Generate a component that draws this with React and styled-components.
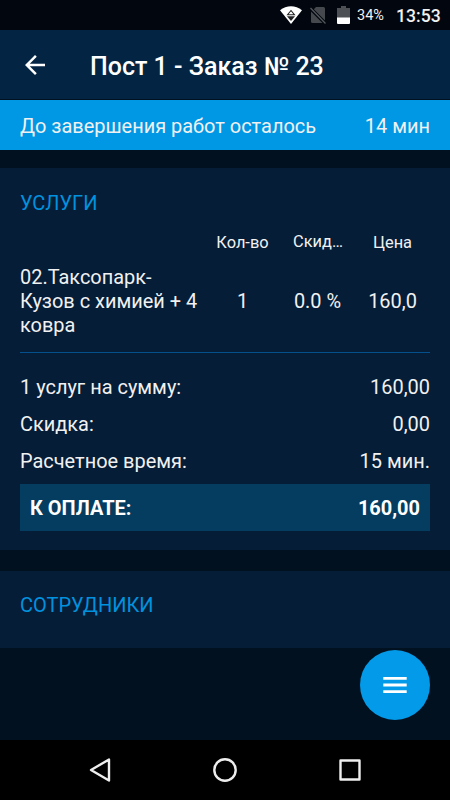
import React from 'react';
import styled, { createGlobalStyle } from 'styled-components';

const GlobalStyle = createGlobalStyle`
  * {
    box-sizing: border-box;
  }

  body {
    margin: 0;
    background: #021120;
    font-family: Roboto, 'Liberation Sans', sans-serif;
  }
`;

const Screen = styled.div`
  position: relative;
  display: flex;
  flex-direction: column;
  width: 450px;
  height: 800px;
  overflow: hidden;
  background: #021120;
  color: #f1f1f1;
  font-size: 19.95px;
`;

const StatusBar = styled.div`
  display: flex;
  align-items: center;
  justify-content: flex-end;
  height: 30px;
  padding-right: 10px;
  background: #01060f;
  font-size: 14.5px;
`;

const StatusIcon = styled.svg`
  display: block;
  margin-right: ${props => props.$gap}px;
`;

const Percent = styled.span`
  width: 27px;
  padding-top: 1px;
  white-space: nowrap;
`;

const Clock = styled.span`
  width: 44px;
  margin-left: 12px;
  padding-top: 1px;
  font-size: 17.6px;
  font-weight: 500;
  line-height: 30px;
  text-align: right;
  white-space: nowrap;
`;

const AppBar = styled.header`
  display: flex;
  align-items: center;
  height: 70px;
  padding-left: 20px;
  background: #032543;
  border-bottom: 1px solid #01111f;
`;

const BackButton = styled.button`
  display: flex;
  width: 30px;
  height: 30px;
  padding: 0;
  border: none;
  background: none;
`;

const Title = styled.h1`
  margin: 4px 0 0 40px;
  color: #fff;
  font-size: 25px;
  font-weight: 500;
  line-height: 30px;
  white-space: nowrap;
`;

const Banner = styled.div`
  display: flex;
  align-items: center;
  justify-content: space-between;
  height: 50px;
  padding: 1px 20px 0;
  background: #0098e4;
  white-space: nowrap;
`;

const Section = styled.section`
  height: ${props => props.$height}px;
  margin-top: ${props => props.$top}px;
  padding: 20px 20px 0;
  background: #061d38;
`;

const SectionTitle = styled.h2`
  margin: 0;
  color: #0092de;
  font-size: 20px;
  font-weight: 400;
  line-height: ${props => props.$line || 29}px;
`;

const Grid = styled.div`
  display: grid;
  grid-template-columns: 185px 75px 75px 75px;
  align-items: center;
`;

const HeadRow = styled(Grid)`
  height: 47px;
  padding-top: 1px;
  font-size: 16.4px;
`;

const HeadCell = styled.span`
  padding: 0 10px;
  overflow: hidden;
  text-align: center;
  text-overflow: ellipsis;
  white-space: nowrap;
`;

const DiscountHead = styled(HeadCell)`
  margin-top: -2px;
  padding: 0 8px 0 13px;
  text-align: left;
`;

const ServiceRow = styled(Grid)`
  height: 88px;
  padding-bottom: 15px;
  border-bottom: 1px solid #04508c;
  line-height: 24px;
`;

const Cell = styled.span`
  text-align: center;
  white-space: nowrap;
`;

const Totals = styled.div`
  padding-top: 16px;
`;

const TotalRow = styled.div`
  display: flex;
  align-items: center;
  justify-content: space-between;
  height: 36.75px;
`;

const PayRow = styled(TotalRow)`
  height: 47px;
  margin-top: 4.75px;
  padding: 1px 10px 0;
  background: #053d61;
  color: #fff;
  font-weight: 700;
`;

const MenuButton = styled.button`
  position: absolute;
  right: 20px;
  bottom: 80px;
  display: flex;
  align-items: center;
  justify-content: center;
  width: 70px;
  height: 70px;
  padding: 0;
  border: none;
  border-radius: 50%;
  background: #039be9;
`;

const NavBar = styled.nav`
  display: flex;
  align-items: center;
  justify-content: center;
  gap: 95px;
  height: 60px;
  margin-top: auto;
  background: #000;
`;

const NavIcon = styled.svg`
  display: block;
  fill: none;
  stroke: #eee;
  stroke-width: 2.4;
  stroke-linejoin: round;
`;

const totals = [
  { label: '1 услуг на сумму:', value: '160,00' },
  { label: 'Скидка:', value: '0,00' },
  { label: 'Расчетное время:', value: '15 мин.' },
];

const App = () => {
  return (
    <Screen>
      <GlobalStyle />
      <StatusBar>
        <StatusIcon $gap={8} width="22" height="18" viewBox="0 0 22 18">
          <path d="M0 4.2C6.5-1 15.5-1 22 4.2L11 18z" fill="#fff" />
          <path d="M11 4.5l3.4 4.2H7.6z" fill="none" stroke="#222" strokeWidth="1.1" />
          <path d="M7 10.3h8L11 15z" fill="#222" />
        </StatusIcon>
        <StatusIcon $gap={11} width="16" height="18" viewBox="0 0 16 18">
          <path d="M6 1h7.5a1.5 1.5 0 0 1 1.5 1.5v12L3.8 3.2zM1 5.5L12.5 17h-10A1.5 1.5 0 0 1 1 15.5z" fill="#45484c" />
          <path d="M.5 2l15 15.5" stroke="#55585c" strokeWidth="1.3" />
        </StatusIcon>
        <StatusIcon $gap={7} width="13" height="18" viewBox="0 0 13 18">
          <path d="M4 0h5v2h4v10H0V2h4z" fill="#4d5054" />
          <path d="M0 11.5h13V17a1 1 0 0 1-1 1H1a1 1 0 0 1-1-1z" fill="#fff" />
        </StatusIcon>
        <Percent>34%</Percent>
        <Clock>13:53</Clock>
      </StatusBar>

      <AppBar>
        <BackButton aria-label="Назад">
          <svg width="30" height="30" viewBox="0 0 24 24">
            <path d="M20 11H7.83l5.59-5.59L12 4l-8 8 8 8 1.41-1.41L7.83 13H20v-2z" fill="#fff" />
          </svg>
        </BackButton>
        <Title>Пост 1 - Заказ № 23</Title>
      </AppBar>

      <Banner>
        <span>До завершения работ осталось</span>
        <span>14 мин</span>
      </Banner>

      <Section $top={18} $height={382}>
        <SectionTitle $line={30}>УСЛУГИ</SectionTitle>
        <HeadRow>
          <span />
          <HeadCell>Кол-во</HeadCell>
          <DiscountHead>Скидка</DiscountHead>
          <HeadCell>Цена</HeadCell>
        </HeadRow>
        <ServiceRow>
          <span>02.Таксопарк-Кузов с химией + 4 ковра</span>
          <Cell>1</Cell>
          <Cell>0.0 %</Cell>
          <Cell>160,0</Cell>
        </ServiceRow>
        <Totals>
          {totals.map(row => (
            <TotalRow key={row.label}>
              <span>{row.label}</span>
              <span>{row.value}</span>
            </TotalRow>
          ))}
          <PayRow>
            <span>К ОПЛАТЕ:</span>
            <span>160,00</span>
          </PayRow>
        </Totals>
      </Section>

      <Section $top={21} $height={77}>
        <SectionTitle>СОТРУДНИКИ</SectionTitle>
      </Section>

      <MenuButton aria-label="Меню">
        <svg width="24" height="16" viewBox="0 0 24 16">
          <path d="M.3 0h23.4v2.8H.3zM.3 6.6h23.4v2.8H.3zM.3 13.2h23.4V16H.3z" fill="#fff" />
        </svg>
      </MenuButton>

      <NavBar>
        <NavIcon width="30" height="30" viewBox="0 0 30 30">
          <path d="M24 4.5v21L6 15z" />
        </NavIcon>
        <NavIcon width="30" height="30" viewBox="0 0 30 30">
          <circle cx="15" cy="15" r="10.7" />
        </NavIcon>
        <NavIcon width="30" height="30" viewBox="0 0 30 30">
          <rect x="5.5" y="5.5" width="19" height="19" />
        </NavIcon>
      </NavBar>
    </Screen>
  );
};

export default App;
